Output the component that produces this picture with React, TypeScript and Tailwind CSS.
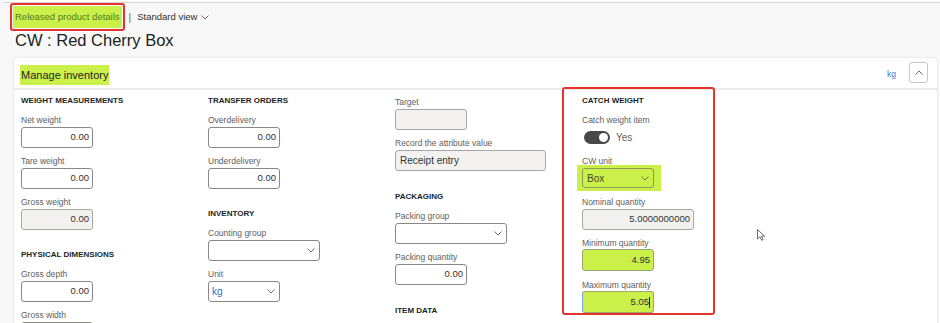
import React from 'react';

const Chevron = ({ up = false }: { up?: boolean }) => (
  <svg width="8" height="5" viewBox="0 0 8 5" className="shrink-0">
    <path d={up ? 'M0.5 4.5 L4 1 L7.5 4.5' : 'M0.5 0.5 L4 4 L7.5 0.5'} fill="none" stroke="#605e5c" strokeWidth="0.9" />
  </svg>
);

const SectionTitle = ({ children, className = '' }: { children: React.ReactNode; className?: string }) => (
  <div className={`h-[10px] leading-[10px] text-[8px] font-bold text-[#201f1e] mb-[8px] whitespace-nowrap ${className}`}>{children}</div>
);

const Label = ({ children }: { children: React.ReactNode }) => (
  <div className="h-[12px] leading-[12px] text-[8.5px] text-[#605e5c] mb-[1px] whitespace-nowrap">{children}</div>
);

const NumInput = ({ value, wide = false, disabled = false }: { value: string; wide?: boolean; disabled?: boolean }) => (
  <div
    className={`${wide ? 'w-[112px]' : 'w-[72px]'} h-[21px] border rounded-[3px] flex items-center justify-end pr-[3px] text-[9.5px] text-[#323130] ${
      disabled ? 'bg-[#f3f2f1] border-[#a8a6a4]' : 'bg-white border-[#8a8886]'
    }`}
  >
    {value}
  </div>
);

const Dropdown = ({ value = '', wide = false, blue = false }: { value?: string; wide?: boolean; blue?: boolean }) => (
  <div
    className={`${wide ? 'w-[112px]' : 'w-[72px]'} h-[21px] border border-[#8a8886] rounded-[3px] bg-white flex items-center justify-between pl-[3px] pr-[4px] text-[10px] ${
      blue ? 'text-[#2f6fd0]' : 'text-[#323130]'
    }`}
  >
    <span>{value}</span>
    <Chevron />
  </div>
);

const Field = ({ label, children }: { label: string; children: React.ReactNode }) => (
  <div className="mb-[7px]">
    <Label>{label}</Label>
    {children}
  </div>
);

export default function App() {
  return (
    <div className="relative w-[940px] h-[323px] overflow-hidden bg-[#f8f8f8] font-['Liberation_Sans',Arial,sans-serif]">
      <div className="h-[3px] ml-[2px] bg-white border-b border-[#d4d4d4] rounded-bl-[4px]" />

      <div className="flex items-center h-[28px]">
        <div className="ml-[10px] h-[28px] border-2 border-[#e5322d] rounded-[3px] p-[1px] flex">
          <div className="h-full px-[2px] bg-[#ccf04a] flex items-center text-[9.5px] text-[#4f7a1f]">Released product details</div>
        </div>
        <span className="ml-[4px] text-[10px] text-[#605e5c]">|</span>
        <span className="ml-[6px] text-[9.5px] text-[#323130]">Standard view</span>
        <span className="ml-[4px]">
          <Chevron />
        </span>
      </div>

      <div className="-mt-[1px] ml-[15px] h-[20px] leading-[20px] text-[16.5px] text-[#201f1e]">CW : Red Cherry Box</div>

      <div className="mt-[8px] ml-[14px] w-[923px] h-[300px] bg-white rounded-[4px] shadow-[0_0_2px_rgba(0,0,0,0.18)]">
        <div className="h-[32px] border-b-2 border-[#ebebeb] flex items-start justify-between">
          <div className="ml-[6px] mt-[7px] h-[20px] px-[1px] bg-[#ccf04a] flex items-center text-[11px] text-[#252423]">Manage inventory</div>
          <div className="flex items-start">
            <span className="mt-[10px] mr-[13px] text-[8.5px] text-[#3a78c9]">kg</span>
            <div className="mt-[4px] mr-[9px] w-[19px] h-[21px] border border-[#c8c6c4] rounded-[3px] flex items-center justify-center">
              <Chevron up />
            </div>
          </div>
        </div>

        <div className="grid grid-cols-[187px_187px_187px_187px] pl-[7px]">
          <div className="flex flex-col items-start pt-[6px]">
            <SectionTitle>WEIGHT MEASUREMENTS</SectionTitle>
            <Field label="Net weight"><NumInput value="0.00" /></Field>
            <Field label="Tare weight"><NumInput value="0.00" /></Field>
            <Field label="Gross weight"><NumInput value="0.00" disabled /></Field>
            <SectionTitle className="mt-[13px]">PHYSICAL DIMENSIONS</SectionTitle>
            <Field label="Gross depth"><NumInput value="0.00" /></Field>
            <Field label="Gross width"><NumInput value="0.00" /></Field>
          </div>

          <div className="flex flex-col items-start pt-[6px]">
            <SectionTitle>TRANSFER ORDERS</SectionTitle>
            <Field label="Overdelivery"><NumInput value="0.00" /></Field>
            <Field label="Underdelivery"><NumInput value="0.00" /></Field>
            <SectionTitle className="mt-[13px]">INVENTORY</SectionTitle>
            <Field label="Counting group"><Dropdown wide /></Field>
            <Field label="Unit"><Dropdown value="kg" blue /></Field>
          </div>

          <div className="flex flex-col items-start pt-[6px]">
            <Field label="Target"><NumInput value="" disabled /></Field>
            <Field label="Record the attribute value">
              <div className="w-[151px] h-[21px] border border-[#a8a6a4] rounded-[3px] bg-[#f3f2f1] flex items-center pl-[4px] text-[10px] text-[#323130]">
                Receipt entry
              </div>
            </Field>
            <SectionTitle className="mt-[14px]">PACKAGING</SectionTitle>
            <Field label="Packing group"><Dropdown wide /></Field>
            <Field label="Packing quantity"><NumInput value="0.00" /></Field>
            <SectionTitle className="mt-[14px]">ITEM DATA</SectionTitle>
          </div>

          <div className="relative flex flex-col items-start pt-[6px]">
            <div className="absolute -left-[20px] -top-[3px] w-[153px] h-[228px] border-2 border-[#e5322d] rounded-[3px] pointer-events-none" />
            <SectionTitle>CATCH WEIGHT</SectionTitle>
            <Label>Catch weight item</Label>
            <div className="mt-[4px] mb-[11px] flex items-center h-[13px]">
              <div className="ml-[2px] w-[26px] h-[13px] rounded-full bg-[#4a4846] flex items-center justify-end pr-[2px]">
                <div className="w-[9px] h-[9px] rounded-full bg-white" />
              </div>
              <span className="ml-[6px] text-[10px] text-[#605e5c]">Yes</span>
            </div>
            <Label>CW unit</Label>
            <div className="-mt-[3px] -ml-[5px] w-[84px] py-[3px] pl-[5px] bg-[#ccf04a]">
              <div className="w-[72px] h-[20px] border border-[#8d9a5c] rounded-[3px] flex items-center justify-between pl-[4px] pr-[4px] text-[10px] text-[#3d4a18]">
                <span>Box</span>
                <Chevron />
              </div>
            </div>
            <div className="mt-[5px] mb-[7px]">
              <Label>Nominal quantity</Label>
              <NumInput value="5.0000000000" wide disabled />
            </div>
            <div className="mb-[8px]">
              <Label>Minimum quantity</Label>
              <div className="-mt-[1px] w-[72px] h-[22px] bg-[#ccf04a] border border-[#9aa870] rounded-[3px] flex items-center justify-end pr-[3px] text-[9.5px] text-[#323130]">
                4.95
              </div>
            </div>
            <div>
              <Label>Maximum quantity</Label>
              <div className="-mt-[1px] w-[72px] h-[22px] bg-[#ccf04a] border border-[#9aa870] border-l-[#7fa6e0] rounded-[3px] flex items-center justify-end pr-[3px] text-[9.5px] text-[#323130]">
                5.05
                <span className="w-[1px] h-[11px] bg-[#222]" />
              </div>
            </div>
          </div>
        </div>
      </div>

      <svg className="absolute left-[757px] top-[229px]" width="9" height="12" viewBox="0 0 9 12">
        <path d="M0.5 0.5 L0.5 10 L2.9 7.8 L4.6 11.3 L6.1 10.6 L4.4 7.2 L7.6 7.2 Z" fill="#fff" stroke="#444" strokeWidth="0.8" />
      </svg>
    </div>
  );
}
